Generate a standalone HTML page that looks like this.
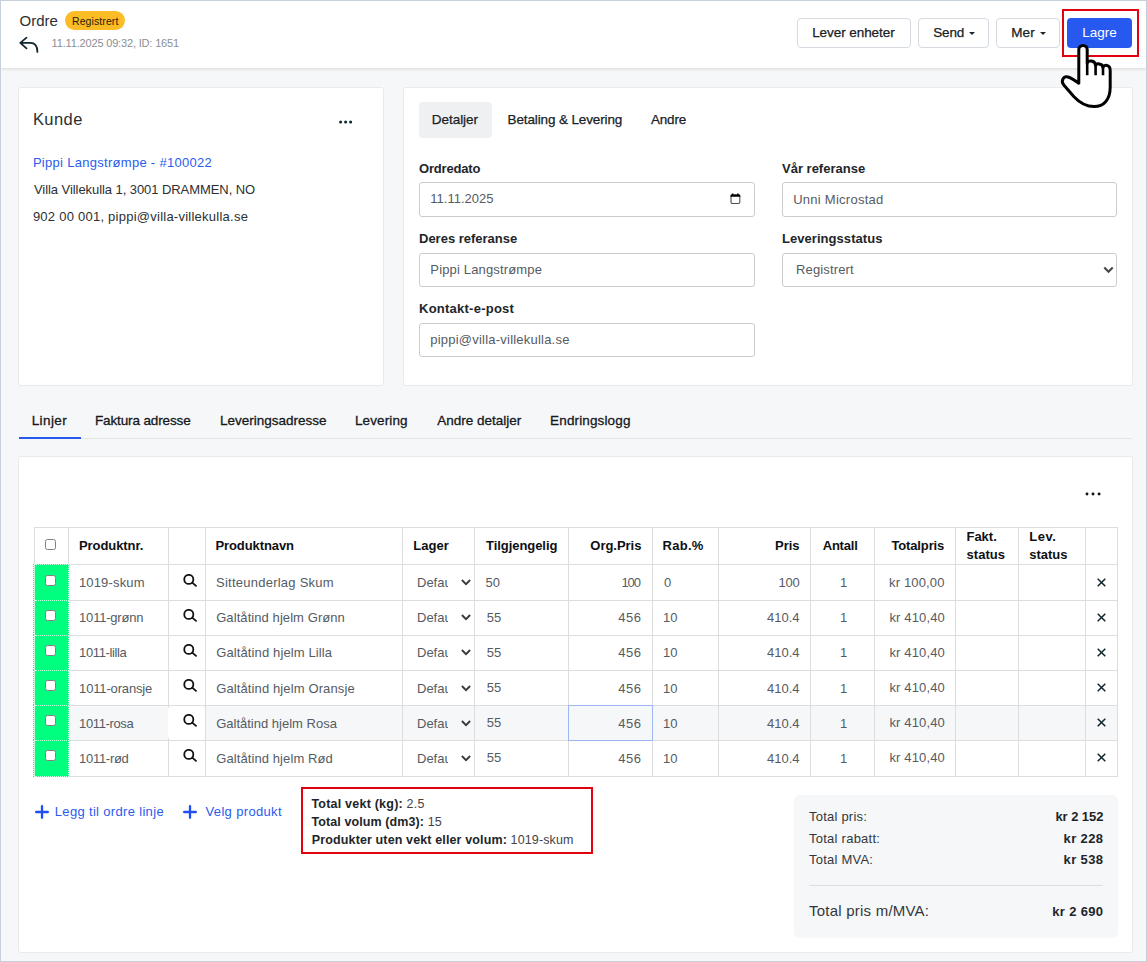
<!DOCTYPE html>
<html lang="no">
<head>
<meta charset="utf-8">
<title>Ordre</title>
<style>
*{box-sizing:border-box;margin:0;padding:0}
html,body{width:1147px;height:962px;overflow:hidden}
body{font-family:"Liberation Sans",sans-serif;font-size:13px;color:#212529;background:#f5f7f9;position:relative}
.abs{position:absolute}
#frame{position:absolute;left:0;top:0;width:1147px;height:962px;border:1px solid #c6cfda;z-index:50}
#hdr{position:absolute;left:1px;top:1px;width:1145px;height:67px;background:#fff;box-shadow:0 1px 3px rgba(0,0,0,.13)}
.t{position:absolute;white-space:nowrap;line-height:1}
.btn{-webkit-text-stroke:0.25px #15181b;position:absolute;height:30px;border:1px solid #d5dbe1;border-radius:4px;background:#fff;font-size:13.5px;color:#212529;text-align:center;line-height:28px;white-space:nowrap}
.caret{display:inline-block;width:0;height:0;border-left:3px solid transparent;border-right:3px solid transparent;border-top:3.5px solid #212529;vertical-align:middle;margin-left:5.5px;margin-top:1px}
.card{position:absolute;background:#fff;border:1px solid #eaeaeb;border-radius:3px}
.inp{position:absolute;border:1px solid #cccccc;border-radius:3px;background:#fff;font-size:13px;color:#555b62;white-space:nowrap}
.cb{position:absolute;width:11px;height:11px;border:1px solid #808080;border-radius:2.5px;background:#fff}
.gr{position:absolute;width:34px;background:#00ff7f;border:1px dotted rgba(255,255,255,.75);border-left:none;background-clip:border-box}
.grl{position:absolute;left:33px;width:2px;background:linear-gradient(90deg,transparent 1px,#c9f5dc 1px),repeating-linear-gradient(180deg,#00ff7f 0 1px,#fff 1px 2px)}
</style>
</head>
<body>
<div id="hdr"></div>
<div id="ordre" class="t" style="top:13px;font-size:15px;color:#2b2f33;left:19.6px;">Ordre</div>
<div class="abs" style="left:65px;top:11px;width:60px;height:19px;border-radius:10px;background:#fbbc25"></div>
<div id="badge" class="t" style="top:15.5px;font-size:10.5px;color:#2a2205;left:72px;letter-spacing:0.089px;">Registrert</div>
<svg class="abs" style="left:18px;top:35px" width="22" height="20" viewBox="0 0 22 20"><path d="M8.5 2.7 L2.3 7.9 L8.5 13.4 M2.6 7.9 H12.3 C16.6 7.9 19.4 11.2 19.4 16.9" fill="none" stroke="#10252f" stroke-width="1.75" stroke-linecap="round" stroke-linejoin="round"/></svg>
<div id="date" class="t" style="top:38px;font-size:11px;color:#8a8f95;left:51.6px;letter-spacing:-0.168px;">11.11.2025 09:32, ID: 1651</div>
<div class="btn" style="left:797px;top:18px;width:114px"><span id="b1" style="letter-spacing:-0.066px;position:relative;left:-0.6px;">Lever enheter</span></div>
<div class="btn" style="left:918px;top:18px;width:71px"><span id="b2" style="letter-spacing:-0.132px;position:relative;left:1.0px;">Send</span><span class="caret"></span></div>
<div class="btn" style="left:996px;top:18px;width:64px"><span id="b3" style="letter-spacing:0.1px;position:relative;left:0.8px;">Mer</span><span class="caret"></span></div>
<div class="abs" style="left:1067px;top:18px;width:65px;height:30px;border-radius:4px;background:#2759f0;color:#fff;font-size:13.5px;line-height:30px;text-align:center"><span id="b4">Lagre</span></div>
<div class="abs" style="left:1062px;top:9px;width:77px;height:48px;border:2px solid #e3000f"></div>
<div class="card" style="left:18px;top:87px;width:366px;height:299px"></div>
<div id="kunde" class="t" style="top:111px;font-size:16.5px;color:#2b2f33;left:32.9px;letter-spacing:0.45px;">Kunde</div>
<svg class="abs" style="left:337.9px;top:118.5px" width="16" height="6" viewBox="0 0 16 6"><circle cx="2.6" cy="3" r="1.5" fill="#0d2430"/><circle cx="7.6" cy="3" r="1.5" fill="#0d2430"/><circle cx="12.6" cy="3" r="1.5" fill="#0d2430"/></svg>
<div id="k1" class="t" style="top:156px;font-size:13px;color:#2a5cee;left:32.9px;letter-spacing:0.292px;">Pippi Langstrømpe - #100022</div>
<div id="k2" class="t" style="top:183px;font-size:13px;color:#2b2f33;left:34px;letter-spacing:-0.066px;">Villa Villekulla 1, 3001 DRAMMEN, NO</div>
<div id="k3" class="t" style="top:210px;font-size:13px;color:#2b2f33;left:32.9px;letter-spacing:0.245px;">902 00 001, pippi@villa-villekulla.se</div>
<div class="card" style="left:403px;top:87px;width:730px;height:299px"></div>
<div class="abs" style="left:419px;top:102px;width:73px;height:36px;border-radius:4px;background:#eff0f2"></div>
<div id="d1" class="t" style="top:113px;font-size:13.5px;color:#212529;left:431.8px;letter-spacing:-0.043px;-webkit-text-stroke:0.25px #15181b;">Detaljer</div>
<div id="d2" class="t" style="top:113px;font-size:13.5px;color:#212529;left:507.6px;letter-spacing:-0.133px;-webkit-text-stroke:0.25px #15181b;">Betaling &amp; Levering</div>
<div id="d3" class="t" style="top:113px;font-size:13.5px;color:#212529;left:651px;letter-spacing:-0.2px;-webkit-text-stroke:0.25px #15181b;">Andre</div>
<div id="l1" class="t" style="top:162px;font-size:13px;color:#212529;left:419px;font-weight:bold;letter-spacing:-0.188px;">Ordredato</div>
<div class="inp" style="left:419px;top:182px;width:336px;height:35px;line-height:32.0px;padding-left:11px"><span id="i1" style="position:relative;left:-0.7px;">11.11.2025</span></div>
<div id="l2" class="t" style="top:232px;font-size:13px;color:#212529;left:419px;font-weight:bold;letter-spacing:-0.007px;">Deres referanse</div>
<div class="inp" style="left:419px;top:253px;width:336px;height:34px;line-height:31.0px;padding-left:11px"><span id="i2" style="letter-spacing:0.156px;position:relative;left:-0.7px;">Pippi Langstrømpe</span></div>
<div id="l3" class="t" style="top:302px;font-size:13px;color:#212529;left:419px;font-weight:bold;letter-spacing:0.246px;">Kontakt-e-post</div>
<div class="inp" style="left:419px;top:323px;width:336px;height:34px;line-height:31.0px;padding-left:11px"><span id="i3" style="letter-spacing:0.217px;position:relative;left:-0.7px;">pippi@villa-villekulla.se</span></div>
<div id="l4" class="t" style="top:162px;font-size:13px;color:#212529;left:782px;font-weight:bold;">Vår referanse</div>
<div class="inp" style="left:782px;top:182px;width:335px;height:35px;line-height:34.0px;padding-left:11px"><span id="i4" style="letter-spacing:0.262px;position:relative;left:-0.8px;">Unni Microstad</span></div>
<div id="l5" class="t" style="top:232px;font-size:13px;color:#212529;left:782px;font-weight:bold;letter-spacing:0.049px;">Leveringsstatus</div>
<div class="inp" style="left:782px;top:253px;width:335px;height:34px;line-height:31.0px;padding-left:14px"><span id="i5" style="letter-spacing:0.144px;position:relative;left:-1.0px;">Registrert</span></div>
<svg class="abs" style="left:729.65px;top:192.8px" width="11" height="12" viewBox="0 0 11 12"><rect x="1" y="2.1" width="8.8" height="8.4" rx="1.2" fill="none" stroke="#505050" stroke-width="1.1"/><path d="M0.45 3.8 V2.9 Q0.45 1.6 1.8 1.6 H9 Q10.35 1.6 10.35 2.9 V3.8 Z" fill="#000"/><path d="M2.6 0.5 V2 M7.9 0.5 V2" stroke="#000" stroke-width="1.5"/></svg>
<svg class="abs" style="left:1102.5px;top:266.3px" width="11" height="8" viewBox="0 0 11 8"><path d="M1.3 1.5 L5.5 5.8 L9.7 1.5" fill="none" stroke="#474747" stroke-width="2.1"/></svg>
<div class="abs" style="left:19px;top:438px;width:1113px;height:1px;background:#e3e5e8"></div>
<div class="abs" style="left:19px;top:437px;width:62px;height:2px;background:#2759f0"></div>
<div id="tab0" class="t" style="top:414px;font-size:13.5px;color:#15181b;left:31.7px;letter-spacing:0.4px;-webkit-text-stroke:0.3px #15181b;">Linjer</div>
<div id="tab1" class="t" style="top:414px;font-size:13.5px;color:#15181b;left:95.0px;letter-spacing:-0.128px;-webkit-text-stroke:0.3px #15181b;">Faktura adresse</div>
<div id="tab2" class="t" style="top:414px;font-size:13.5px;color:#15181b;left:220.0px;letter-spacing:0.0px;-webkit-text-stroke:0.3px #15181b;">Leveringsadresse</div>
<div id="tab3" class="t" style="top:414px;font-size:13.5px;color:#15181b;left:355.0px;letter-spacing:0.115px;-webkit-text-stroke:0.3px #15181b;">Levering</div>
<div id="tab4" class="t" style="top:414px;font-size:13.5px;color:#15181b;left:437.2px;letter-spacing:0.008px;-webkit-text-stroke:0.3px #15181b;">Andre detaljer</div>
<div id="tab5" class="t" style="top:414px;font-size:13.5px;color:#15181b;left:550.1px;letter-spacing:0.135px;-webkit-text-stroke:0.3px #15181b;">Endringslogg</div>
<div class="card" style="left:18px;top:456px;width:1115px;height:497px"></div>
<svg class="abs" style="left:1085px;top:490.6px" width="18" height="6" viewBox="0 0 18 6"><circle cx="2" cy="3" r="1.45" fill="#111"/><circle cx="8" cy="3" r="1.45" fill="#111"/><circle cx="14.1" cy="3" r="1.45" fill="#111"/></svg>
<div class="abs" style="left:34px;top:705px;width:1084px;height:35px;background:#f5f7f9"></div>
<div class="abs" style="left:34px;top:527px;width:1px;height:250px;background:#dddddd"></div>
<div class="abs" style="left:68px;top:527px;width:1px;height:250px;background:#dddddd"></div>
<div class="abs" style="left:168px;top:527px;width:1px;height:250px;background:#dddddd"></div>
<div class="abs" style="left:205px;top:527px;width:1px;height:250px;background:#dddddd"></div>
<div class="abs" style="left:402px;top:527px;width:1px;height:250px;background:#dddddd"></div>
<div class="abs" style="left:474px;top:527px;width:1px;height:250px;background:#dddddd"></div>
<div class="abs" style="left:568px;top:527px;width:1px;height:250px;background:#dddddd"></div>
<div class="abs" style="left:652px;top:527px;width:1px;height:250px;background:#dddddd"></div>
<div class="abs" style="left:718px;top:527px;width:1px;height:250px;background:#dddddd"></div>
<div class="abs" style="left:810px;top:527px;width:1px;height:250px;background:#dddddd"></div>
<div class="abs" style="left:874px;top:527px;width:1px;height:250px;background:#dddddd"></div>
<div class="abs" style="left:955px;top:527px;width:1px;height:250px;background:#dddddd"></div>
<div class="abs" style="left:1018px;top:527px;width:1px;height:250px;background:#dddddd"></div>
<div class="abs" style="left:1085px;top:527px;width:1px;height:250px;background:#dddddd"></div>
<div class="abs" style="left:1117px;top:527px;width:1px;height:250px;background:#dddddd"></div>
<div class="abs" style="left:34px;top:527px;width:1084px;height:1px;background:#dddddd"></div>
<div class="abs" style="left:34px;top:564px;width:1084px;height:1px;background:#dddddd"></div>
<div class="abs" style="left:34px;top:600px;width:1084px;height:1px;background:#dddddd"></div>
<div class="abs" style="left:34px;top:635px;width:1084px;height:1px;background:#dddddd"></div>
<div class="abs" style="left:34px;top:670px;width:1084px;height:1px;background:#dddddd"></div>
<div class="abs" style="left:34px;top:705px;width:1084px;height:1px;background:#dddddd"></div>
<div class="abs" style="left:34px;top:740px;width:1084px;height:1px;background:#dddddd"></div>
<div class="abs" style="left:34px;top:776px;width:1084px;height:1px;background:#dddddd"></div>
<div class="abs" style="left:168px;top:706px;width:37px;height:34px;background:#fff;border-radius:4px"></div>
<div class="gr" style="left:35px;top:564px;height:37px"></div>
<div class="grl" style="top:564px;height:37px"></div>
<div class="gr" style="left:35px;top:600px;height:36px"></div>
<div class="grl" style="top:600px;height:36px"></div>
<div class="gr" style="left:35px;top:635px;height:36px"></div>
<div class="grl" style="top:635px;height:36px"></div>
<div class="gr" style="left:35px;top:670px;height:36px"></div>
<div class="grl" style="top:670px;height:36px"></div>
<div class="gr" style="left:35px;top:705px;height:36px"></div>
<div class="grl" style="top:705px;height:36px"></div>
<div class="gr" style="left:35px;top:740px;height:37px"></div>
<div class="grl" style="top:740px;height:37px"></div>
<div class="abs" style="left:568px;top:705px;width:85px;height:36px;border:1px solid #9db7f5"></div>
<div id="h1" class="t" style="top:539px;font-size:13px;color:#0e1013;left:79.0px;font-weight:bold;letter-spacing:-0.081px;">Produktnr.</div>
<div id="h2" class="t" style="top:539px;font-size:13px;color:#0e1013;left:215.5px;font-weight:bold;letter-spacing:-0.1px;">Produktnavn</div>
<div id="h3" class="t" style="top:539px;font-size:13px;color:#0e1013;left:413.2px;font-weight:bold;letter-spacing:0.05px;">Lager</div>
<div id="h4" class="t" style="top:539px;font-size:13px;color:#0e1013;left:486px;font-weight:bold;letter-spacing:-0.055px;">Tilgjengelig</div>
<div id="h5" class="t" style="top:539px;font-size:13px;color:#0e1013;right:505.6px;font-weight:bold;letter-spacing:-0.028px;">Org.Pris</div>
<div id="h6" class="t" style="top:539px;font-size:13px;color:#0e1013;left:662.5px;font-weight:bold;letter-spacing:0.275px;">Rab.%</div>
<div id="h7" class="t" style="top:539px;font-size:13px;color:#0e1013;right:347.4px;font-weight:bold;letter-spacing:0.0px;">Pris</div>
<div id="h8" class="t" style="top:539px;font-size:13px;color:#0e1013;left:822.7px;font-weight:bold;letter-spacing:-0.2px;">Antall</div>
<div id="h9" class="t" style="top:539px;font-size:13px;color:#0e1013;right:202.8px;font-weight:bold;letter-spacing:-0.125px;">Totalpris</div>
<div id="h10" class="t" style="top:530px;font-size:13px;color:#0e1013;left:966.5px;font-weight:bold;letter-spacing:-0.025px;">Fakt.</div>
<div id="h11" class="t" style="top:548px;font-size:13px;color:#0e1013;left:966.5px;font-weight:bold;letter-spacing:0.06px;">status</div>
<div id="h12" class="t" style="top:530px;font-size:13px;color:#0e1013;left:1029.3px;font-weight:bold;letter-spacing:0.5px;">Lev.</div>
<div id="h13" class="t" style="top:548px;font-size:13px;color:#0e1013;left:1029.3px;font-weight:bold;letter-spacing:-0.04px;">status</div>
<div class="cb" style="left:45px;top:539px"></div>
<div class="cb" style="left:45px;top:575px"></div>
<div id="r0c0" class="t" style="top:576px;font-size:13px;color:#555b62;left:78.9px;letter-spacing:0.174px;">1019-skum</div>
<div id="r0c1" class="t" style="top:576px;font-size:13px;color:#555b62;left:216.0px;letter-spacing:0.247px;">Sitteunderlag Skum</div>
<svg class="abs" style="left:183px;top:574px" width="14" height="14" viewBox="0 0 14 14"><circle cx="5.8" cy="5.4" r="4.55" fill="none" stroke="#111" stroke-width="1.8"/><path d="M9.2 8.6 L13 11.9" stroke="#111" stroke-width="1.8" stroke-linecap="round"/></svg>
<div id="r0c2" class="t" style="top:576px;font-size:13px;color:#555b62;left:417px;width:31px;overflow:hidden;">Default</div>
<svg class="abs" style="left:460.5px;top:579px" width="10" height="7" viewBox="0 0 10 7"><path d="M0.9 1.0 L5 5.2 L9.1 1.0" fill="none" stroke="#3a3a3a" stroke-width="1.9"/></svg>
<div id="r0c3" class="t" style="top:576px;font-size:13px;color:#555b62;left:485.5px;">50</div>
<div id="r0c4" class="t" style="top:576px;font-size:13px;color:#555b62;right:507.2px;letter-spacing:-1.1px;">100</div>
<div id="r0c5" class="t" style="top:576px;font-size:13px;color:#555b62;left:664.0px;">0</div>
<div id="r0c6" class="t" style="top:576px;font-size:13px;color:#555b62;right:347.5px;letter-spacing:-0.25px;">100</div>
<div id="r0c7" class="t" style="top:576px;font-size:13px;color:#555b62;left:837.7px;width:12px;text-align:center;">1</div>
<div id="r0c8" class="t" style="top:576px;font-size:13px;color:#555b62;right:202.4px;letter-spacing:0.15px;">kr 100,00</div>
<svg class="abs" style="left:1097px;top:578px" width="9" height="9" viewBox="0 0 9 9"><path d="M0.7 0.7 L8.3 8.3 M8.3 0.7 L0.7 8.3" stroke="#10242e" stroke-width="1.5"/></svg>
<div class="cb" style="left:45px;top:610px"></div>
<div id="r1c0" class="t" style="top:611px;font-size:13px;color:#555b62;left:79.1px;letter-spacing:-0.211px;">1011-grønn</div>
<div id="r1c1" class="t" style="top:611px;font-size:13px;color:#555b62;left:216.2px;letter-spacing:0.075px;">Galtåtind hjelm Grønn</div>
<svg class="abs" style="left:183px;top:609px" width="14" height="14" viewBox="0 0 14 14"><circle cx="5.8" cy="5.4" r="4.55" fill="none" stroke="#111" stroke-width="1.8"/><path d="M9.2 8.6 L13 11.9" stroke="#111" stroke-width="1.8" stroke-linecap="round"/></svg>
<div id="r1c2" class="t" style="top:611px;font-size:13px;color:#555b62;left:417px;width:31px;overflow:hidden;">Default</div>
<svg class="abs" style="left:460.5px;top:614px" width="10" height="7" viewBox="0 0 10 7"><path d="M0.9 1.0 L5 5.2 L9.1 1.0" fill="none" stroke="#3a3a3a" stroke-width="1.9"/></svg>
<div id="r1c3" class="t" style="top:611px;font-size:13px;color:#555b62;left:486.7px;">55</div>
<div id="r1c4" class="t" style="top:611px;font-size:13px;color:#555b62;right:505.6px;letter-spacing:0.5px;">456</div>
<div id="r1c5" class="t" style="top:611px;font-size:13px;color:#555b62;left:663px;">10</div>
<div id="r1c6" class="t" style="top:611px;font-size:13px;color:#555b62;right:347.5px;letter-spacing:-0.025px;">410.4</div>
<div id="r1c7" class="t" style="top:611px;font-size:13px;color:#555b62;left:837.7px;width:12px;text-align:center;">1</div>
<div id="r1c8" class="t" style="top:611px;font-size:13px;color:#555b62;right:202.0px;letter-spacing:0.148px;">kr 410,40</div>
<svg class="abs" style="left:1097px;top:613px" width="9" height="9" viewBox="0 0 9 9"><path d="M0.7 0.7 L8.3 8.3 M8.3 0.7 L0.7 8.3" stroke="#10242e" stroke-width="1.5"/></svg>
<div class="cb" style="left:45px;top:645px"></div>
<div id="r2c0" class="t" style="top:646px;font-size:13px;color:#555b62;left:79.1px;letter-spacing:-0.378px;">1011-lilla</div>
<div id="r2c1" class="t" style="top:646px;font-size:13px;color:#555b62;left:216.2px;letter-spacing:0.12px;">Galtåtind hjelm Lilla</div>
<svg class="abs" style="left:183px;top:644px" width="14" height="14" viewBox="0 0 14 14"><circle cx="5.8" cy="5.4" r="4.55" fill="none" stroke="#111" stroke-width="1.8"/><path d="M9.2 8.6 L13 11.9" stroke="#111" stroke-width="1.8" stroke-linecap="round"/></svg>
<div id="r2c2" class="t" style="top:646px;font-size:13px;color:#555b62;left:417px;width:31px;overflow:hidden;">Default</div>
<svg class="abs" style="left:460.5px;top:649px" width="10" height="7" viewBox="0 0 10 7"><path d="M0.9 1.0 L5 5.2 L9.1 1.0" fill="none" stroke="#3a3a3a" stroke-width="1.9"/></svg>
<div id="r2c3" class="t" style="top:646px;font-size:13px;color:#555b62;left:486.7px;">55</div>
<div id="r2c4" class="t" style="top:646px;font-size:13px;color:#555b62;right:505.6px;letter-spacing:0.5px;">456</div>
<div id="r2c5" class="t" style="top:646px;font-size:13px;color:#555b62;left:663px;">10</div>
<div id="r2c6" class="t" style="top:646px;font-size:13px;color:#555b62;right:347.5px;letter-spacing:-0.025px;">410.4</div>
<div id="r2c7" class="t" style="top:646px;font-size:13px;color:#555b62;left:837.7px;width:12px;text-align:center;">1</div>
<div id="r2c8" class="t" style="top:646px;font-size:13px;color:#555b62;right:202.0px;letter-spacing:0.148px;">kr 410,40</div>
<svg class="abs" style="left:1097px;top:648px" width="9" height="9" viewBox="0 0 9 9"><path d="M0.7 0.7 L8.3 8.3 M8.3 0.7 L0.7 8.3" stroke="#10242e" stroke-width="1.5"/></svg>
<div class="cb" style="left:45px;top:680px"></div>
<div id="r3c0" class="t" style="top:682px;font-size:13px;color:#555b62;left:79.1px;letter-spacing:-0.155px;">1011-oransje</div>
<div id="r3c1" class="t" style="top:682px;font-size:13px;color:#555b62;left:216.2px;letter-spacing:0.118px;">Galtåtind hjelm Oransje</div>
<svg class="abs" style="left:183px;top:679px" width="14" height="14" viewBox="0 0 14 14"><circle cx="5.8" cy="5.4" r="4.55" fill="none" stroke="#111" stroke-width="1.8"/><path d="M9.2 8.6 L13 11.9" stroke="#111" stroke-width="1.8" stroke-linecap="round"/></svg>
<div id="r3c2" class="t" style="top:682px;font-size:13px;color:#555b62;left:417px;width:31px;overflow:hidden;">Default</div>
<svg class="abs" style="left:460.5px;top:685px" width="10" height="7" viewBox="0 0 10 7"><path d="M0.9 1.0 L5 5.2 L9.1 1.0" fill="none" stroke="#3a3a3a" stroke-width="1.9"/></svg>
<div id="r3c3" class="t" style="top:681px;font-size:13px;color:#555b62;left:486.7px;">55</div>
<div id="r3c4" class="t" style="top:682px;font-size:13px;color:#555b62;right:505.6px;letter-spacing:0.5px;">456</div>
<div id="r3c5" class="t" style="top:682px;font-size:13px;color:#555b62;left:663px;">10</div>
<div id="r3c6" class="t" style="top:682px;font-size:13px;color:#555b62;right:347.5px;letter-spacing:-0.025px;">410.4</div>
<div id="r3c7" class="t" style="top:682px;font-size:13px;color:#555b62;left:837.7px;width:12px;text-align:center;">1</div>
<div id="r3c8" class="t" style="top:681px;font-size:13px;color:#555b62;right:202.0px;letter-spacing:0.148px;">kr 410,40</div>
<svg class="abs" style="left:1097px;top:683px" width="9" height="9" viewBox="0 0 9 9"><path d="M0.7 0.7 L8.3 8.3 M8.3 0.7 L0.7 8.3" stroke="#10242e" stroke-width="1.5"/></svg>
<div class="cb" style="left:45px;top:715px"></div>
<div id="r4c0" class="t" style="top:717px;font-size:13px;color:#555b62;left:79.1px;letter-spacing:-0.375px;">1011-rosa</div>
<div id="r4c1" class="t" style="top:717px;font-size:13px;color:#555b62;left:216.2px;">Galtåtind hjelm Rosa</div>
<svg class="abs" style="left:183px;top:714px" width="14" height="14" viewBox="0 0 14 14"><circle cx="5.8" cy="5.4" r="4.55" fill="none" stroke="#111" stroke-width="1.8"/><path d="M9.2 8.6 L13 11.9" stroke="#111" stroke-width="1.8" stroke-linecap="round"/></svg>
<div id="r4c2" class="t" style="top:717px;font-size:13px;color:#555b62;left:417px;width:31px;overflow:hidden;">Default</div>
<svg class="abs" style="left:460.5px;top:720px" width="10" height="7" viewBox="0 0 10 7"><path d="M0.9 1.0 L5 5.2 L9.1 1.0" fill="none" stroke="#3a3a3a" stroke-width="1.9"/></svg>
<div id="r4c3" class="t" style="top:716px;font-size:13px;color:#555b62;left:486.7px;">55</div>
<div id="r4c4" class="t" style="top:717px;font-size:13px;color:#555b62;right:505.6px;letter-spacing:0.5px;">456</div>
<div id="r4c5" class="t" style="top:717px;font-size:13px;color:#555b62;left:663px;">10</div>
<div id="r4c6" class="t" style="top:717px;font-size:13px;color:#555b62;right:347.5px;letter-spacing:-0.025px;">410.4</div>
<div id="r4c7" class="t" style="top:717px;font-size:13px;color:#555b62;left:837.7px;width:12px;text-align:center;">1</div>
<div id="r4c8" class="t" style="top:716px;font-size:13px;color:#555b62;right:202.0px;letter-spacing:0.148px;">kr 410,40</div>
<svg class="abs" style="left:1097px;top:718px" width="9" height="9" viewBox="0 0 9 9"><path d="M0.7 0.7 L8.3 8.3 M8.3 0.7 L0.7 8.3" stroke="#10242e" stroke-width="1.5"/></svg>
<div class="cb" style="left:45px;top:750px"></div>
<div id="r5c0" class="t" style="top:752px;font-size:13px;color:#555b62;left:79.1px;letter-spacing:-0.3px;">1011-rød</div>
<div id="r5c1" class="t" style="top:752px;font-size:13px;color:#555b62;left:216.2px;letter-spacing:0.094px;">Galtåtind hjelm Rød</div>
<svg class="abs" style="left:183px;top:749px" width="14" height="14" viewBox="0 0 14 14"><circle cx="5.8" cy="5.4" r="4.55" fill="none" stroke="#111" stroke-width="1.8"/><path d="M9.2 8.6 L13 11.9" stroke="#111" stroke-width="1.8" stroke-linecap="round"/></svg>
<div id="r5c2" class="t" style="top:752px;font-size:13px;color:#555b62;left:417px;width:31px;overflow:hidden;">Default</div>
<svg class="abs" style="left:460.5px;top:755px" width="10" height="7" viewBox="0 0 10 7"><path d="M0.9 1.0 L5 5.2 L9.1 1.0" fill="none" stroke="#3a3a3a" stroke-width="1.9"/></svg>
<div id="r5c3" class="t" style="top:751px;font-size:13px;color:#555b62;left:486.7px;">55</div>
<div id="r5c4" class="t" style="top:752px;font-size:13px;color:#555b62;right:505.6px;letter-spacing:0.5px;">456</div>
<div id="r5c5" class="t" style="top:752px;font-size:13px;color:#555b62;left:663px;">10</div>
<div id="r5c6" class="t" style="top:752px;font-size:13px;color:#555b62;right:347.5px;letter-spacing:-0.025px;">410.4</div>
<div id="r5c7" class="t" style="top:752px;font-size:13px;color:#555b62;left:837.7px;width:12px;text-align:center;">1</div>
<div id="r5c8" class="t" style="top:751px;font-size:13px;color:#555b62;right:202.0px;letter-spacing:0.148px;">kr 410,40</div>
<svg class="abs" style="left:1097px;top:753px" width="9" height="9" viewBox="0 0 9 9"><path d="M0.7 0.7 L8.3 8.3 M8.3 0.7 L0.7 8.3" stroke="#10242e" stroke-width="1.5"/></svg>
<svg class="abs" style="left:35px;top:805px" width="14" height="14" viewBox="0 0 14 14"><path d="M7 1.15 V12.85 M1.15 7 H12.85" stroke="#1f4ff0" stroke-width="2.3" stroke-linecap="round"/></svg>
<div id="a1" class="t" style="top:805px;font-size:13px;color:#2a5cee;left:54.8px;letter-spacing:0.326px;">Legg til ordre linje</div>
<svg class="abs" style="left:183.2px;top:805px" width="14" height="14" viewBox="0 0 14 14"><path d="M7 1.15 V12.85 M1.15 7 H12.85" stroke="#1f4ff0" stroke-width="2.3" stroke-linecap="round"/></svg>
<div id="a2" class="t" style="top:805px;font-size:13px;color:#2a5cee;left:205.5px;letter-spacing:0.346px;">Velg produkt</div>
<div class="abs" style="left:301px;top:787px;width:292px;height:67px;border:2px solid #e3000f"></div>
<div id="w1" class="t" style="top:798px;font-size:12.5px;color:#444;left:311.4px;letter-spacing:0.221px;"><b style="color:#212529">Total vekt (kg):</b> 2.5</div>
<div id="w2" class="t" style="top:816px;font-size:12.5px;color:#444;left:311.4px;letter-spacing:0.1px;"><b style="color:#212529">Total volum (dm3):</b> 15</div>
<div id="w3" class="t" style="top:834px;font-size:12.5px;color:#444;left:311.8px;letter-spacing:0.129px;"><b style="color:#212529">Produkter uten vekt eller volum:</b> 1019-skum</div>
<div class="abs" style="left:794px;top:795px;width:324px;height:143px;border-radius:6px;background:#f5f7f9"></div>
<div id="s1" class="t" style="top:810px;font-size:13px;color:#33373b;left:809px;letter-spacing:0.22px;">Total pris:</div>
<div id="s2" class="t" style="top:832px;font-size:13px;color:#33373b;left:809px;letter-spacing:0.25px;">Total rabatt:</div>
<div id="s3" class="t" style="top:853px;font-size:13px;color:#33373b;left:809px;letter-spacing:0.233px;">Total MVA:</div>
<div id="v1" class="t" style="top:810px;font-size:13px;color:#212529;right:43.6px;font-weight:bold;letter-spacing:-0.056px;">kr 2 152</div>
<div id="v2" class="t" style="top:832px;font-size:13px;color:#212529;right:43.6px;font-weight:bold;letter-spacing:0.38px;">kr 228</div>
<div id="v3" class="t" style="top:853px;font-size:13px;color:#212529;right:43.6px;font-weight:bold;letter-spacing:0.38px;">kr 538</div>
<div class="abs" style="left:809px;top:885px;width:294px;height:1px;background:#dcdee1"></div>
<div id="s4" class="t" style="top:903px;font-size:15px;color:#33373b;left:809px;letter-spacing:0.225px;">Total pris m/MVA:</div>
<div id="v4" class="t" style="top:905px;font-size:13px;color:#212529;right:43.6px;font-weight:bold;letter-spacing:0.343px;">kr 2 690</div>
<svg class="abs" style="left:1055px;top:40px;z-index:40" width="64" height="72" viewBox="1055 40 64 72">
<path d="M1078.8 83.2 V49.6 a4.2 4.2 0 0 1 8.4 0 V63 C1087.5 60.3 1095.2 59.8 1095.6 65.5 C1096 63.2 1102.6 63 1103 67.5 C1103.5 64.3 1110.2 64 1110.2 70.5 V87 C1110.2 99.5 1104 106.6 1094 106.6 C1085.5 106.6 1080 103.2 1074 96.8 L1064 85.2 C1060.3 80.8 1063.5 75.8 1068 77 C1072 78.2 1075.5 80.8 1078.8 83.2 Z" fill="#fff" stroke="#000" stroke-width="3" stroke-linejoin="round" stroke-linecap="round"/>
<path d="M1087.2 62 V75.3 M1095.6 64.5 V75.3 M1103 66.5 V75.3" fill="none" stroke="#000" stroke-width="2.6"/>
</svg>
<div id="frame"></div>
</body>
</html>
